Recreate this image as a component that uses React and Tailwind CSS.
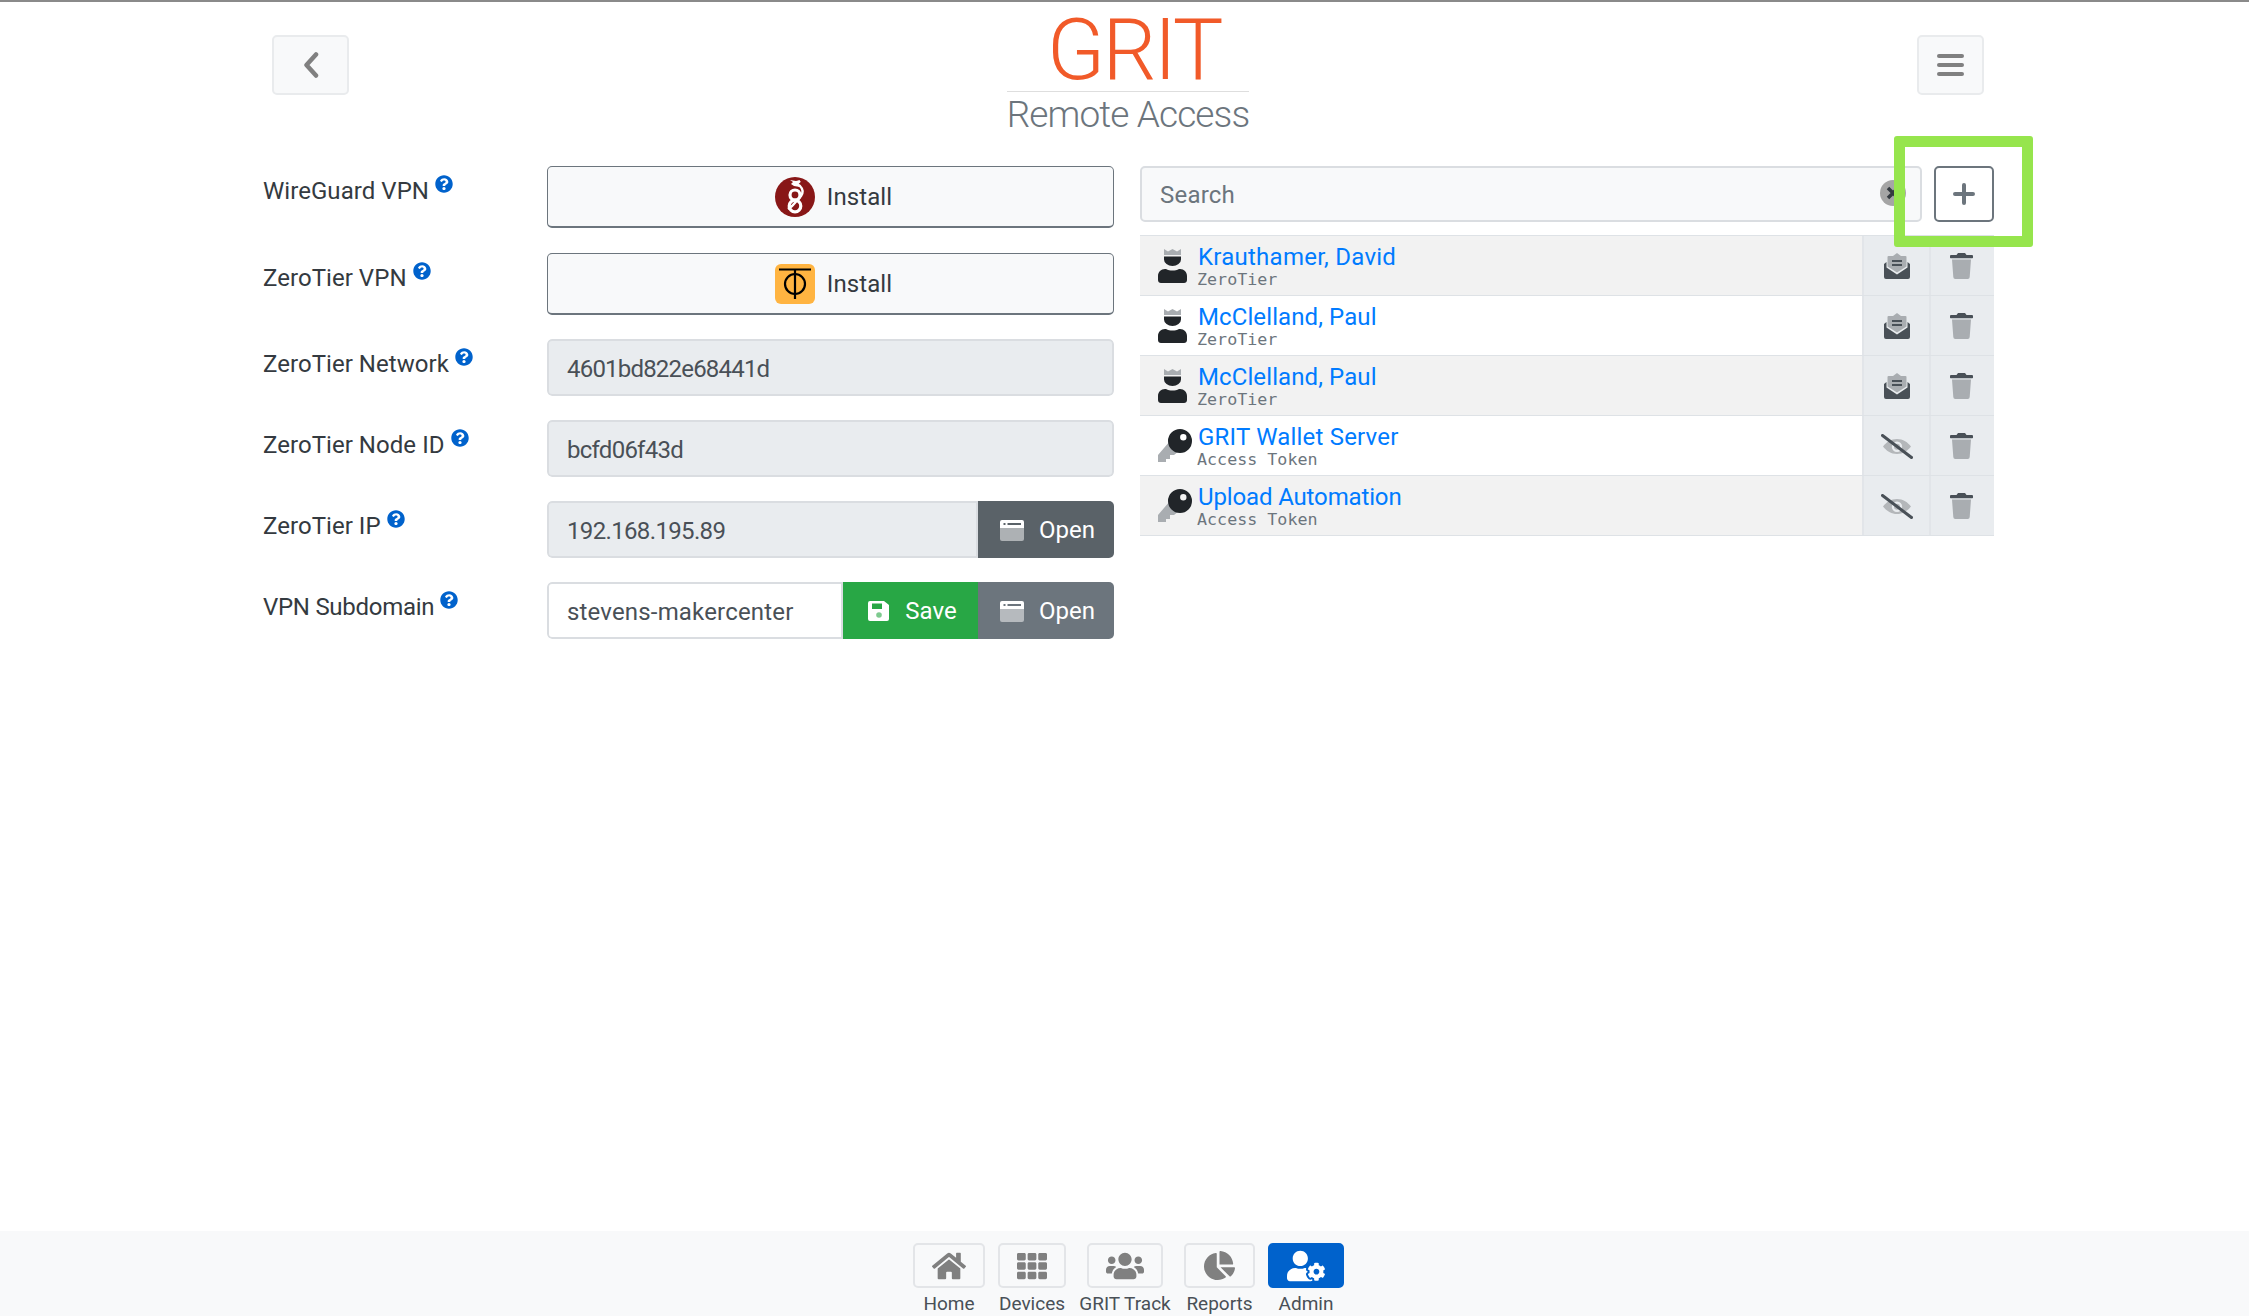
import React from 'react';
import { FaHome, FaTh, FaUsers, FaChartPie, FaUserCog, FaQuestionCircle } from 'react-icons/fa';

const DARK = '#212529';
const MID = '#495057';
const LIGHT = '#a9adb1';

const UserCrown = () => (
  <svg width="29" height="34" viewBox="0 0 29 34">
    <path d="M6 0l4 2.5L14.5 0 19 2.5 23 0v6H6z" fill={LIGHT} />
    <path d="M6 7.5h17v3a8.5 6.5 0 0 1-17 0z" fill={DARK} />
    <path d="M8 20c2 1 4 1.5 6.5 1.5S19 21 21 20h1c4 0 7 3 7 7v4c0 1.7-1.3 3-3 3H3c-1.7 0-3-1.3-3-3v-4c0-4 3-7 7-7z" fill={DARK} />
  </svg>
);

const KeyIcon = () => (
  <svg width="34" height="34" viewBox="0 0 34 34">
    <path d="M12 12L0 26v7h8v-3h4v-4h4l5-4z" fill={LIGHT} />
    <path fillRule="evenodd" d="M22 0a12 12 0 1 1 0 24 12 12 0 0 1 0-24zm3.300 5a3.200 3.200 0 1 0 0 6.400 3.200 3.200 0 0 0 0-6.400z" fill={DARK} />
  </svg>
);

const EnvelopeIcon = () => (
  <svg width="26" height="26" viewBox="0 0 26 26">
    <path d="M13 0l4 3h4.500a1 1 0 0 1 1 1v9.500L13 19.500 3.500 13.500V4a1 1 0 0 1 1-1H9z" fill={LIGHT} />
    <rect x="8" y="7" width="10" height="2" fill={MID} />
    <rect x="8" y="11" width="10" height="2" fill={MID} />
    <path d="M0 11l2.500-2v5.500L13 21.500l10.500-7V9l2.500 2v13a2 2 0 0 1-2 2H2a2 2 0 0 1-2-2z" fill={MID} />
  </svg>
);

const EyeSlash = () => (
  <svg width="32" height="25" viewBox="0 0 32 25">
    <path fillRule="evenodd" d="M16 5c6 0 11 3.500 14 7.500-3 4-8 7.500-14 7.500S5 16.500 2 12.500C5 8.500 10 5 16 5zm0 2.500a5.200 5.200 0 1 0 0 10.400 5.200 5.200 0 0 0 0-10.400z" fill="#b4b7ba" />
    <circle cx="16" cy="12.700" r="3" fill="#b4b7ba" />
    <path d="M1.500 1.500L30.500 23.500" stroke={MID} strokeWidth="3" strokeLinecap="round" />
  </svg>
);

const TrashIcon = () => (
  <svg width="23" height="26" viewBox="0 0 23 26">
    <path d="M8 0h7l1.500 2H22a1 1 0 0 1 1 1v1.500a.7.7 0 0 1-.7.7H.7A.7.7 0 0 1 0 4.500V3a1 1 0 0 1 1-1h5.500z" fill={MID} />
    <path d="M2 6.500h19l-1.300 17.600a2 2 0 0 1-2 1.900H5.300a2 2 0 0 1-2-1.900z" fill={LIGHT} />
  </svg>
);

const SaveIcon = () => (
  <svg width="22" height="20" viewBox="0 0 22 20">
    <path fillRule="evenodd" d="M2 0h14l5 4v14a2 2 0 0 1-2 2H2a2 2 0 0 1-2-2V2a2 2 0 0 1 2-2zm2 2.500V8h10V2.500z" fill="#fff" />
    <circle cx="11" cy="14" r="2.800" fill="#28a745" opacity=".6" />
  </svg>
);

const WindowIcon = () => (
  <svg width="24" height="21" viewBox="0 0 24 21">
    <path d="M0 8h24v11a2 2 0 0 1-2 2H2a2 2 0 0 1-2-2z" fill="#fff" opacity=".5" />
    <path fillRule="evenodd" d="M2 0h20a2 2 0 0 1 2 2v6H0V2a2 2 0 0 1 2-2zm1.500 3v2h2V3zm4 0v2H21V3z" fill="#fff" />
  </svg>
);

const WireGuardLogo = () => (
  <svg width="40" height="40" viewBox="0 0 40 40">
    <circle cx="20" cy="20" r="20" fill="#881717" />
    <g fill="none" stroke="#fff" strokeWidth="3.200">
      <circle cx="20" cy="18" r="5" />
      <circle cx="20" cy="29" r="5.800" />
    </g>
    <path d="M25 4l-3 3 3 2c3 3 3 7 1 10l-9 10-4 3" fill="none" stroke="#fff" strokeWidth="2.400" />
    <path d="M15 3l6 1 4-1-2 4 2 3-6-1-3-2 2-2z" fill="#fff" />
  </svg>
);

const ZeroTierLogo = () => (
  <svg width="40" height="40" viewBox="0 0 40 40">
    <rect width="40" height="40" rx="6" fill="#ffb441" />
    <path d="M4 5.500h32M20 5.500V35" stroke="#000" strokeWidth="2.200" />
    <circle cx="20" cy="20" r="10" fill="none" stroke="#000" strokeWidth="2.200" />
  </svg>
);

const formRows = [
  { label: 'WireGuard VPN', kind: 'install', logo: <WireGuardLogo />, rowClass: 'mb-[1px]' },
  { label: 'ZeroTier VPN', kind: 'install', logo: <ZeroTierLogo /> },
  { label: 'ZeroTier Network', kind: 'readonly', value: '4601bd822e68441d', track: 'tracking-[-0.8px]' },
  { label: 'ZeroTier Node ID', kind: 'readonly', value: 'bcfd06f43d', track: 'tracking-[-0.75px]' },
  { label: 'ZeroTier IP', kind: 'open', value: '192.168.195.89', track: 'tracking-[-0.65px]' },
  { label: 'VPN Subdomain', kind: 'edit', value: 'stevens-makercenter', track: 'tracking-[0.17px]', labelTrack: 'tracking-[-0.28px]' },
];

const accessRows = [
  { name: 'Krauthamer, David', sub: 'ZeroTier', type: 'user', track: 'tracking-[0.25px]' },
  { name: 'McClelland, Paul', sub: 'ZeroTier', type: 'user', track: 'tracking-[0.1px]' },
  { name: 'McClelland, Paul', sub: 'ZeroTier', type: 'user', track: 'tracking-[0.1px]' },
  { name: 'GRIT Wallet Server', sub: 'Access Token', type: 'token', track: 'tracking-[0.2px]' },
  { name: 'Upload Automation', sub: 'Access Token', type: 'token', track: 'tracking-[-0.14px]' },
];

const navItems = [
  { label: 'Home', icon: <FaHome size={34} />, col: 'w-[72px]', btn: 'w-[72px]' },
  { label: 'Devices', icon: <FaTh size={30} />, col: 'w-[68px]', btn: 'w-[68px]' },
  { label: 'GRIT Track', icon: <FaUsers size={38} />, col: 'w-[92px]', btn: 'w-[76px]' },
  { label: 'Reports', icon: <FaChartPie size={31} />, col: 'w-[71px]', btn: 'w-[71px]' },
  { label: 'Admin', icon: <FaUserCog size={38} />, col: 'w-[76px]', btn: 'w-[76px]', active: true },
];

const FormControl = ({ row }) => {
  if (row.kind === 'install') {
    return (
      <button className="h-[62px] w-full flex items-center justify-center gap-[12px] pl-[6px] rounded-[5px] border border-b-2 border-[#6c757d] bg-[#f8f9fa] text-[#343a40]">
        {row.logo}
        <span className="tracking-[0.1px]">Install</span>
      </button>
    );
  }
  return (
    <div className="h-[57px] w-full flex rounded-[5px] overflow-hidden">
      <div className={`flex-1 flex items-center pl-[18px] pt-[2px] text-[#495057] ${row.track} border-2 border-[#dadde1] rounded-l-[5px] ${row.kind === 'edit' ? 'bg-white' : 'bg-[#e9ecef]'} ${row.kind === 'readonly' ? 'rounded-r-[5px]' : ''}`}>
        {row.value}
      </div>
      {row.kind === 'edit' && (
        <button className="w-[135px] flex items-center justify-center gap-[15px] pl-[4px] pt-[1px] bg-[#28a745] text-white">
          <SaveIcon />
          Save
        </button>
      )}
      {row.kind !== 'readonly' && (
        <button className={`w-[136px] flex items-center justify-center gap-[15px] pl-[3px] pt-[1px] text-white ${row.kind === 'open' ? 'bg-[#5a6268]' : 'bg-[#6c757d]'}`}>
          <WindowIcon />
          Open
        </button>
      )}
    </div>
  );
};

const AccessRow = ({ row, index }) => (
  <div className={`h-[60px] flex border-t border-[#dee2e6] ${index % 2 === 0 ? 'bg-[#f2f2f2]' : 'bg-white'}`}>
    <div className="w-[58px] pl-[18px] flex items-center shrink-0">
      {row.type === 'user' ? <UserCrown /> : <KeyIcon />}
    </div>
    <div className="flex-1 pt-[8px]">
      <div className={`text-[#007bff] leading-[26px] ${row.track}`}>{row.name}</div>
      <div className="text-[16.700px] leading-[18px] text-[#6c757d] -ml-[1px] font-['DejaVu_Sans_Mono',monospace]">{row.sub}</div>
    </div>
    <div className="w-[67px] flex items-center justify-center pt-[1px] bg-[#e9ecef] border-l-2 border-[#e2e5e9]">
      {row.type === 'user' ? <EnvelopeIcon /> : <EyeSlash />}
    </div>
    <div className="w-[65px] flex items-center justify-center pr-[2px] pt-[1px] bg-[#e9ecef] border-l-2 border-[#e2e5e9]">
      <TrashIcon />
    </div>
  </div>
);

export default function App() {
  return (
    <div className="h-[1316px] flex flex-col bg-white border-t-2 border-[#8a8a8a] text-[24px] text-[#343a40] font-['Roboto',sans-serif]">
      {/* Header */}
      <header className="h-[164px] shrink-0 ml-[272px] w-[1712px] grid grid-cols-[1fr_auto_1fr] items-start">
        <button className="mt-[33px] w-[77px] h-[60px] flex items-center justify-center rounded-[5px] border-2 border-[#e9ebed] bg-[#f8f9fa]">
          <svg width="16" height="26" viewBox="0 0 16 26">
            <path d="M13 2.500L3.500 13l9.500 10.500" fill="none" stroke="#808080" strokeWidth="4.500" strokeLinecap="round" strokeLinejoin="round" />
          </svg>
        </button>
        <div className="w-[242px] flex flex-col items-center">
          <div className="w-full h-[90px] pt-[8px] pl-[12px] text-center text-[85px] leading-[80px] tracking-[-2.600px] font-light text-[#f15a29] border-b border-[#dedede]">GRIT</div>
          <div className="mt-[1px] text-[37px] leading-[44px] tracking-[-0.88px] font-light text-[#6c757d] whitespace-nowrap">Remote Access</div>
        </div>
        <button className="mt-[33px] justify-self-end w-[67px] h-[60px] flex flex-col items-center justify-center gap-[5px] rounded-[5px] border-2 border-[#e9ebed] bg-[#f8f9fa]">
          <span className="w-[27px] h-[4px] rounded-full bg-[#808080]" />
          <span className="w-[27px] h-[4px] rounded-full bg-[#808080]" />
          <span className="w-[27px] h-[4px] rounded-full bg-[#808080]" />
        </button>
      </header>

      {/* Main */}
      <main className="flex-1 ml-[263px] w-[1731px] flex gap-[26px]">
        <div className="w-[851px] shrink-0 flex flex-col gap-[24px]">
          {formRows.map((row) => (
            <div key={row.label} className={`flex ${row.rowClass || ''}`}>
              <div className="w-[284px] shrink-0 flex items-start pt-[8px]">
                <span className={`leading-[34px] text-[#343a40] ${row.labelTrack || 'tracking-[0.05px]'}`}>{row.label}</span>
                <FaQuestionCircle size={18} className="ml-[6px] mt-[1px] text-[#0062cc]" />
              </div>
              <div className="flex-1">
                <FormControl row={row} />
              </div>
            </div>
          ))}
        </div>

        <div className="w-[854px] relative">
          <div className="flex gap-[12px]">
            <div className="relative w-[782px] h-[56px] flex items-center pl-[18px] pt-[2px] rounded-[5px] border-2 border-[#dadde1] bg-[#f8f9fa] text-[#6c757d] tracking-[0.2px]">
              Search
              <span className="absolute left-[738px] top-[12px] w-[26px] h-[26px] rounded-full bg-[#a5a5a5] flex items-center justify-center">
                <svg width="14" height="14" viewBox="0 0 14 14">
                  <path d="M2 2l10 10M12 2L2 12" stroke="#343a40" strokeWidth="3.500" />
                </svg>
              </span>
            </div>
            <button className="w-[60px] h-[56px] flex items-center justify-center rounded-[5px] border-2 border-[#6c757d] bg-white">
              <svg width="22" height="22" viewBox="0 0 22 22">
                <path d="M11 2v18M2 11h18" stroke="#6c757d" strokeWidth="4" strokeLinecap="round" />
              </svg>
            </button>
          </div>

          <div className="mt-[13px] border-b border-[#dee2e6]">
            {accessRows.map((row, i) => (
              <AccessRow key={i} row={row} index={i} />
            ))}
          </div>

          {/* Highlight box over the add button */}
          <div className="absolute left-[754px] top-[-30px] w-[139px] h-[111px] border-[11px] border-[#96e54d] rounded-[3px]" />
        </div>
      </main>

      {/* Bottom nav */}
      <footer className="h-[85px] shrink-0 bg-[#f8f9fa] flex justify-center gap-[13px] pt-[12px] pl-[8px]">
        {navItems.map((item) => (
          <div key={item.label} className={`${item.col} flex flex-col items-center`}>
            <button
              className={`${item.btn} h-[45px] flex items-center justify-center rounded-[5px] border-2 ${
                item.active ? 'bg-[#0062cc] border-[#0062cc] text-white' : 'border-[#e3e5e8] text-[#808080]'
              }`}
            >
              {item.icon}
            </button>
            <span className="mt-[5px] text-[19px] leading-[22px] text-[#495057] whitespace-nowrap">{item.label}</span>
          </div>
        ))}
      </footer>
    </div>
  );
}
